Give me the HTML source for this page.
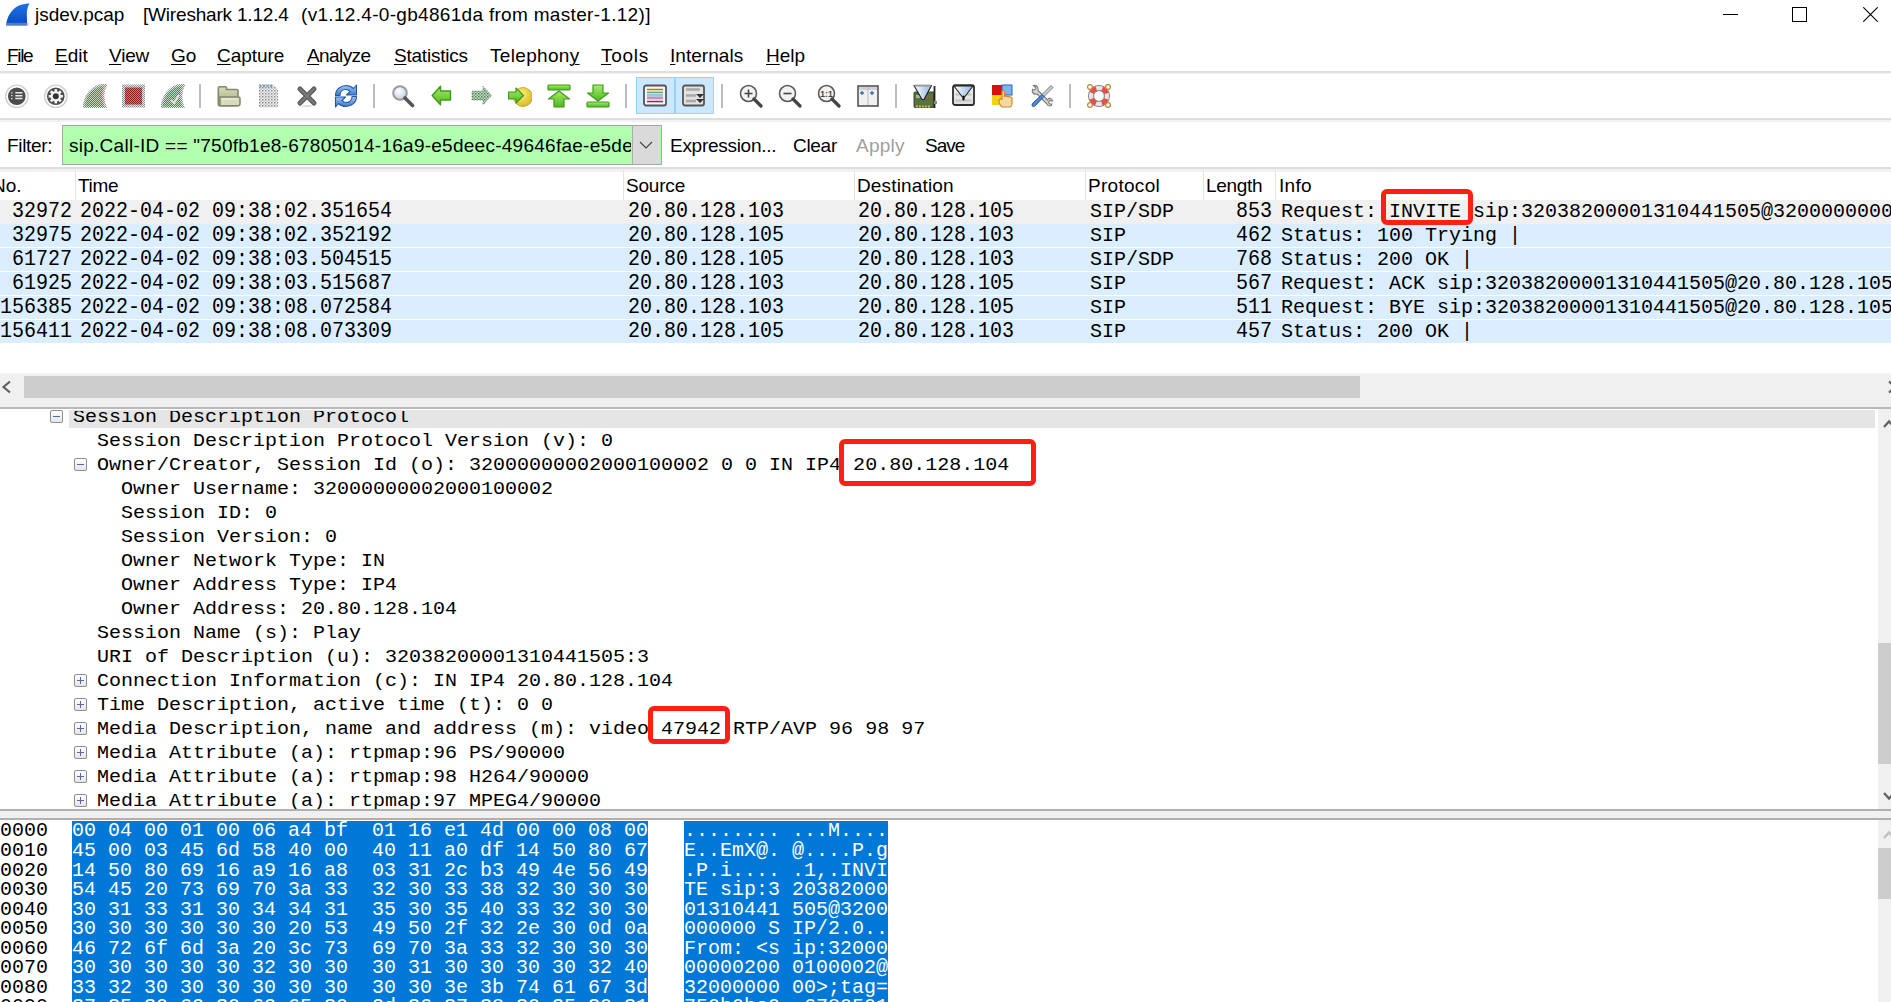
<!DOCTYPE html>
<html><head><meta charset="utf-8"><title>Wireshark</title>
<style>
*{margin:0;padding:0;box-sizing:border-box}
html,body{width:1891px;height:1002px;overflow:hidden;background:#fff}
body{position:relative;font-family:"Liberation Sans",sans-serif;color:#000}
.a{position:absolute;white-space:pre}
.ui{font-size:19px;line-height:20px}
.m{font-family:"Liberation Mono",monospace;font-size:20px;line-height:24px;color:#000}
.pl{transform:scaleY(1.06);transform-origin:0 17.3px}
.tr{transform:scaleY(0.95);transform-origin:0 17.3px}
.hx{transform:scaleY(1.05);transform-origin:0 15.1px}
.hl{position:absolute;left:0;width:1891px}
.ul{text-decoration:underline;text-underline-offset:2px;text-decoration-thickness:1px}
.ico{position:absolute;top:84px;width:24px;height:24px}
.sep{position:absolute;top:84px;width:2px;height:24px;background:#bdbdbd}
.row{position:absolute;left:0;width:1891px;height:23px;background:#daeeff}
.rbox{position:absolute;border:5px solid #ff1f15;border-radius:6px}
.exp{position:absolute;width:13px;height:13px;border:1px solid #8f8f8f;border-radius:2px;background:linear-gradient(#fdfdfd,#e6e6e6)}
.exp i{position:absolute;left:2px;top:5px;width:7px;height:1.3px;background:#5868b0}
.exp b{position:absolute;left:4.9px;top:2px;width:1.3px;height:7px;background:#5868b0}
</style></head><body>
<svg class="a" style="left:6px;top:3px" width="25" height="24" viewBox="0 0 25 24">
<defs><linearGradient id="fin" x1="0" y1="0" x2="0" y2="1"><stop offset="0" stop-color="#1f74e6"/><stop offset="1" stop-color="#0849c0"/></linearGradient></defs>
<path d="M0 22.5 C1 14 5 6 13 2.5 C17 1 21 0.5 23.5 0.5 C22 3 21 6 20.8 10 L21.2 22.5 Z" fill="url(#fin)"/><rect x="0" y="19.8" width="22.5" height="2.7" fill="#8aa4cc" opacity="0.55"/></svg>
<div class="a ui" style="left:35px;top:5px;letter-spacing:0.0px;">jsdev.pcap</div>
<div class="a ui" style="left:143px;top:5px;letter-spacing:-0.19px;">[Wireshark 1.12.4</div>
<div class="a ui" style="left:301px;top:5px;letter-spacing:0.31px;">(v1.12.4-0-gb4861da from master-1.12)]</div>
<div class="a" style="left:1723px;top:14px;width:15px;height:1px;background:#000"></div>
<div class="a" style="left:1792px;top:7px;width:15px;height:15px;border:1px solid #000"></div>
<svg class="a" style="left:1863px;top:7px" width="15" height="15" viewBox="0 0 15 15"><path d="M0.3 0.3 L14.7 14.7 M14.7 0.3 L0.3 14.7" stroke="#000" stroke-width="1.1"/></svg>
<div class="a ui" style="left:7px;top:46px;letter-spacing:-1.33px;"><span class="ul">F</span>ile</div>
<div class="a ui" style="left:55px;top:46px;letter-spacing:0.0px;"><span class="ul">E</span>dit</div>
<div class="a ui" style="left:109px;top:46px;letter-spacing:-0.17px;"><span class="ul">V</span>iew</div>
<div class="a ui" style="left:171px;top:46px;letter-spacing:0.0px;"><span class="ul">G</span>o</div>
<div class="a ui" style="left:217px;top:46px;letter-spacing:-0.05px;"><span class="ul">C</span>apture</div>
<div class="a ui" style="left:307px;top:46px;letter-spacing:-0.6px;"><span class="ul">A</span>nalyze</div>
<div class="a ui" style="left:394px;top:46px;letter-spacing:-0.22px;"><span class="ul">S</span>tatistics</div>
<div class="a ui" style="left:490px;top:46px;letter-spacing:0.32px;">Telephon<span class="ul">y</span></div>
<div class="a ui" style="left:601px;top:46px;letter-spacing:0.7px;"><span class="ul">T</span>ools</div>
<div class="a ui" style="left:670px;top:46px;letter-spacing:0.04px;"><span class="ul">I</span>nternals</div>
<div class="a ui" style="left:766px;top:46px;letter-spacing:0.0px;"><span class="ul">H</span>elp</div>
<div class="hl" style="top:71px;height:2px;background:#e0e0e0"></div>
<div class="hl" style="top:73px;height:1px;background:#f2f2f2"></div>
<!-- TOOLBAR -->
<svg width="0" height="0" style="position:absolute"><defs>
<pattern id="chkG" width="2" height="2" patternUnits="userSpaceOnUse"><rect width="2" height="2" fill="#c4d4c4"/><rect width="1" height="1" fill="#2e962e"/><rect x="1" y="1" width="1" height="1" fill="#4a8a4a"/></pattern>
<pattern id="chkR" width="2" height="2" patternUnits="userSpaceOnUse"><rect width="2" height="2" fill="#b88080"/><rect width="1" height="1" fill="#8e1c1c"/><rect x="1" y="1" width="1" height="1" fill="#8a2424"/></pattern>
<pattern id="chkK" width="2" height="2" patternUnits="userSpaceOnUse"><rect width="2" height="2" fill="#e8e8e8"/><rect width="1" height="1" fill="#8a8a8a"/><rect x="1" y="1" width="1" height="1" fill="#969696"/></pattern>
<linearGradient id="gGreen" x1="0" y1="0" x2="0" y2="1"><stop offset="0" stop-color="#a6ec6e"/><stop offset="1" stop-color="#4fb81e"/></linearGradient>
<linearGradient id="gBlue" x1="0" y1="0" x2="0" y2="1"><stop offset="0" stop-color="#9cc6f0"/><stop offset="1" stop-color="#3a7acb"/></linearGradient>
<radialGradient id="gYel" cx="0.4" cy="0.35" r="0.7"><stop offset="0" stop-color="#fff27a"/><stop offset="1" stop-color="#d9b524"/></radialGradient>
<radialGradient id="gGlass" cx="0.4" cy="0.35" r="0.7"><stop offset="0" stop-color="#ffffff"/><stop offset="1" stop-color="#b8cfe6"/></radialGradient>
<linearGradient id="gFold" x1="0" y1="0" x2="0" y2="1"><stop offset="0" stop-color="#e6e8c8"/><stop offset="1" stop-color="#c4c79c"/></linearGradient>
<pattern id="chkG2" width="3" height="3" patternUnits="userSpaceOnUse"><rect width="3" height="3" fill="#c9d6c9"/><rect width="1.5" height="1.5" fill="#4a844a"/><rect x="1.5" y="1.5" width="1.5" height="1.5" fill="#7aa07a"/></pattern><pattern id="chkP" width="3" height="3" patternUnits="userSpaceOnUse"><rect width="3" height="3" fill="#f0f0f0"/><rect width="1.5" height="1.5" fill="#8c8c8c"/><rect x="1.5" y="1.5" width="1.5" height="1.5" fill="#c8c8c8"/></pattern><linearGradient id="gFold2" x1="0" y1="0" x2="0" y2="1"><stop offset="0" stop-color="#dadcb8"/><stop offset="1" stop-color="#a4a684"/></linearGradient></defs></svg>
<svg class="ico" style="left:5px" viewBox="0 0 24 24"><circle cx="11.8" cy="12.3" r="11.2" fill="none" stroke="#cfcfcf" stroke-width="1.4"/><circle cx="11.8" cy="12.3" r="8.8" fill="#4d4d4d"/><path d="M6 8.8h1.6M6 11.7h1.6M6 14.6h1.6" stroke="#cfcfcf" stroke-width="1.3"/><path d="M10.3 8.8h7.2M10.3 11.7h7.2M10.3 14.6h7.2" stroke="#e8e8e8" stroke-width="1.5"/></svg>
<svg class="ico" style="left:44px" viewBox="0 0 24 24"><circle cx="11.8" cy="12.3" r="11.2" fill="none" stroke="#cfcfcf" stroke-width="1.4"/><circle cx="11.8" cy="12.3" r="8.8" fill="#4d4d4d"/><rect x="10.5" y="5.2" width="2.6" height="2.5" fill="#f4f4f4" transform="rotate(0 11.8 12.3)"/><rect x="10.5" y="5.2" width="2.6" height="2.5" fill="#f4f4f4" transform="rotate(45 11.8 12.3)"/><rect x="10.5" y="5.2" width="2.6" height="2.5" fill="#f4f4f4" transform="rotate(90 11.8 12.3)"/><rect x="10.5" y="5.2" width="2.6" height="2.5" fill="#f4f4f4" transform="rotate(135 11.8 12.3)"/><rect x="10.5" y="5.2" width="2.6" height="2.5" fill="#f4f4f4" transform="rotate(180 11.8 12.3)"/><rect x="10.5" y="5.2" width="2.6" height="2.5" fill="#f4f4f4" transform="rotate(225 11.8 12.3)"/><rect x="10.5" y="5.2" width="2.6" height="2.5" fill="#f4f4f4" transform="rotate(270 11.8 12.3)"/><rect x="10.5" y="5.2" width="2.6" height="2.5" fill="#f4f4f4" transform="rotate(315 11.8 12.3)"/><circle cx="11.8" cy="12.3" r="5.2" fill="#f4f4f4"/><circle cx="11.8" cy="12.3" r="3" fill="#333"/></svg>
<svg class="ico" style="left:83px" viewBox="0 0 24 24"><path d="M0.5 23.5 C1.5 14 6 6 14 2.5 C17 1.2 20.5 0.8 23.3 0.8 C21 4 20 8 20.3 13 C20.6 17 21.3 20.5 22.5 23.5 Z" fill="url(#chkG)" stroke="url(#chkK)" stroke-width="2.2"/></svg>
<svg class="ico" style="left:122px" viewBox="0 0 24 24"><rect x="0" y="0.5" width="23" height="23" fill="url(#chkK)"/><rect x="3" y="3.5" width="17" height="17" fill="url(#chkR)"/></svg>
<svg class="ico" style="left:161px" viewBox="0 0 24 24"><path d="M0.5 23.5 C1.5 14 6 6 14 2.5 C17 1.2 20.5 0.8 23.3 0.8 C21 4 20 8 20.3 13 C20.6 17 21.3 20.5 22.5 23.5 Z" fill="url(#chkG)" stroke="url(#chkK)" stroke-width="2.2"/><path d="M10 16 l3 3 l5 -8" fill="none" stroke="#d8ead8" stroke-width="2.2"/></svg>
<div class="sep" style="left:199px"></div>
<svg class="ico" style="left:217px" viewBox="0 0 24 24"><path d="M1.3 4.2 Q1.3 2.8 2.7 2.8 H8.5 Q9.5 2.8 9.5 4 V5.5 H19.5 Q21 5.5 21 7 V20 Q21 21.8 19.3 21.8 H2.8 Q1.3 21.8 1.3 20.3 Z" fill="url(#gFold2)" stroke="#85876c" stroke-width="1.6"/><path d="M3 13 H21.5 Q23 13 23 15 V19.5 Q23 21.8 21 21.8 H3 Z" fill="#d9dbbc" stroke="#85876c" stroke-width="1.5"/><path d="M4.5 15 H20.5" stroke="#eef0dc" stroke-width="1.2"/></svg>
<svg class="ico" style="left:256px" viewBox="0 0 24 24"><path d="M3 0.5 h14 l5 5 v18 h-19z" fill="url(#chkP)"/><path d="M3.5 2 h13" stroke="#5f93c0" stroke-width="2.4" stroke-dasharray="2 1.5" opacity="0.8"/></svg>
<svg class="ico" style="left:295px" viewBox="0 0 24 24"><path d="M5 5 L19 19 M19 5 L5 19" stroke="#5e5e5e" stroke-width="5" stroke-linecap="round"/><path d="M5 5 L19 19 M19 5 L5 19" stroke="#7a7a7a" stroke-width="2" stroke-linecap="round"/><ellipse cx="12" cy="22" rx="5" ry="1" fill="#ddd"/></svg>
<svg class="ico" style="left:334px" viewBox="0 0 24 24"><path d="M1.5 11.5 C1.5 5 7 1.5 12 1.5 C15.5 1.5 18 3 19.5 4.5 L22.5 1 V11 H12.5 L16 7.5 C15 6.5 13.5 5.5 12 5.5 C8.5 5.5 6 8 6 11.5 Z" fill="url(#gBlue)" stroke="#2456a4" stroke-width="1.1" stroke-linejoin="round"/><path d="M22.5 12.5 C22.5 19 17 22.5 12 22.5 C8.5 22.5 6 21 4.5 19.5 L1.5 23 V13 H11.5 L8 16.5 C9 17.5 10.5 18.5 12 18.5 C15.5 18.5 18 16 18 12.5 Z" fill="url(#gBlue)" stroke="#2456a4" stroke-width="1.1" stroke-linejoin="round"/></svg>
<div class="sep" style="left:373px"></div>
<svg class="ico" style="left:391px" viewBox="0 0 24 24"><circle cx="9" cy="9" r="6.8" fill="url(#gGlass)" stroke="#9a9a9a" stroke-width="2"/><path d="M14 14 L21.5 21.5" stroke="#555" stroke-width="3.6" stroke-linecap="round"/></svg>
<svg class="ico" style="left:430px" viewBox="0 0 24 24"><path d="M2.2 11.5 L10.5 2.2 V7 H20.5 V16 H10.5 V20.8 Z" fill="url(#gGreen)" stroke="#3e9a14" stroke-width="1.4" stroke-linejoin="round"/></svg>
<svg class="ico" style="left:469px" viewBox="0 0 24 24"><path d="M22.5 11.5 L14 2.2 V7 H3 V16 H14 V20.8 Z" fill="url(#chkG2)" stroke="#5a8a5a" stroke-width="0.8" stroke-dasharray="1.5 1.5"/></svg>
<svg class="ico" style="left:508px" viewBox="0 0 24 24"><circle cx="15" cy="13" r="9.5" fill="url(#gYel)" stroke="#c49a20" stroke-width="0.8"/><path d="M0.5 13 V8 H8 V4 L15.5 11.5 L8 19 V15 H0.5 Z" fill="url(#gGreen)" stroke="#3e9a14" stroke-width="1.2" stroke-linejoin="round"/></svg>
<svg class="ico" style="left:547px" viewBox="0 0 24 24"><rect x="1" y="1" width="22" height="5" rx="1" fill="url(#gGreen)" stroke="#3e9a14" stroke-width="1.2"/><path d="M1.5 15 L12 7 L22.5 15 H17 V23 H7 V15 Z" fill="url(#gGreen)" stroke="#3e9a14" stroke-width="1.2" stroke-linejoin="round"/></svg>
<svg class="ico" style="left:586px" viewBox="0 0 24 24"><rect x="1" y="18" width="22" height="5" rx="1" fill="url(#gGreen)" stroke="#3e9a14" stroke-width="1.2"/><path d="M1.5 9 L12 17 L22.5 9 H17 V1 H7 V9 Z" fill="url(#gGreen)" stroke="#3e9a14" stroke-width="1.2" stroke-linejoin="round"/></svg>
<div class="sep" style="left:625px"></div>
<div class="a" style="left:636px;top:77px;width:78px;height:37px;background:#cce8ff;border:1.5px solid #99d1ff"></div>
<div class="a" style="left:674px;top:77px;width:2px;height:37px;background:#99d1ff"></div>
<svg class="ico" style="left:643px" viewBox="0 0 24 24"><rect x="1" y="1.5" width="22" height="20" rx="2" fill="#f4f4f4" stroke="#555" stroke-width="1.8"/><path d="M4 5.5h16" stroke="#c06050" stroke-width="1.4"/><path d="M4 7h16" stroke="#e8e070" stroke-width="1.4"/><path d="M4 8.5h16" stroke="#50b090" stroke-width="1.4"/><path d="M4 10.5h16" stroke="#b0b8e8" stroke-width="1.6"/><path d="M4 12h16" stroke="#90c0a8" stroke-width="1.4"/><path d="M4 14h16" stroke="#c070c0" stroke-width="1.6"/><path d="M4 15.8h16" stroke="#f8c0f8" stroke-width="1.8"/><path d="M4 17.6h16" stroke="#604850" stroke-width="1.4"/></svg>
<svg class="ico" style="left:682px" viewBox="0 0 24 24"><rect x="1" y="1.5" width="21" height="20" rx="2" fill="#e2e2e2" stroke="#555" stroke-width="1.8"/><path d="M4 5.5h14M4 11.5h10M4 17h10" stroke="#a8a8a8" stroke-width="2.6"/><path d="M14 10 L22 10 L18 14Z M14 15 L22 15 L18 19Z" fill="#333"/></svg>
<div class="sep" style="left:721px"></div>
<svg class="ico" style="left:739px" viewBox="0 0 24 24"><circle cx="9.5" cy="9.5" r="8" fill="#f2f2f2" stroke="#5a5a5a" stroke-width="1.6"/><path d="M9.5 5.5v8M5.5 9.5h8" stroke="#444" stroke-width="1.6"/><path d="M15 15 L22 22" stroke="#444" stroke-width="3.2" stroke-linecap="round"/></svg>
<svg class="ico" style="left:778px" viewBox="0 0 24 24"><circle cx="9.5" cy="9.5" r="8" fill="#f2f2f2" stroke="#5a5a5a" stroke-width="1.6"/><path d="M5.5 9.5h8" stroke="#444" stroke-width="1.6"/><path d="M15 15 L22 22" stroke="#444" stroke-width="3.2" stroke-linecap="round"/></svg>
<svg class="ico" style="left:817px" viewBox="0 0 24 24"><circle cx="9.5" cy="9.5" r="8" fill="#f2f2f2" stroke="#5a5a5a" stroke-width="1.6"/><text x="9.5" y="12.5" font-size="8.5" font-family="Liberation Sans" font-weight="bold" text-anchor="middle" fill="#444">1:1</text><path d="M15 15 L22 22" stroke="#444" stroke-width="3.2" stroke-linecap="round"/></svg>
<svg class="ico" style="left:856px" viewBox="0 0 24 24"><rect x="2" y="2" width="20" height="20" fill="#f0f0f0" stroke="#555" stroke-width="1.6"/><rect x="3" y="3" width="18" height="3" fill="#cfcfcf"/><path d="M12 3v18" stroke="#bbb" stroke-width="1"/><path d="M4 9h4M6 7v4M14 9h4M16 7v4" stroke="#3a6fb8" stroke-width="1.3"/></svg>
<div class="sep" style="left:895px"></div>
<svg class="ico" style="left:913px" viewBox="0 0 24 24"><linearGradient id="gFun" x1="0" y1="0" x2="1" y2="0"><stop offset="0" stop-color="#ffffff"/><stop offset="1" stop-color="#8fb4e0"/></linearGradient><path d="M1 9 Q1 8 2 8 H21 V22 Q21 24 19 24 H3 Q1 24 1 22 Z" fill="#56733e" stroke="#2c3b22" stroke-width="0.9"/><path d="M3 22.5 h15" stroke="#c9b45a" stroke-width="2" stroke-dasharray="2 1"/><path d="M14 11v3M17 11v3" stroke="#c04a3a" stroke-width="1.3"/><path d="M3 11 h5 v3 h-5z" fill="#a9b4a0"/><path d="M21.5 2 V24" stroke="#222" stroke-width="1.8"/><path d="M21 17 h3 v3 h-3z" fill="#888"/><path d="M1 1.5 H18.5 L11 15.5 H9 Z" fill="url(#gFun)" stroke="#1e1e1e" stroke-width="1.1" stroke-linejoin="round"/><path d="M1.5 1.6 H18" stroke="#9a9a9a" stroke-width="2"/></svg>
<svg class="ico" style="left:952px" viewBox="0 0 24 24"><linearGradient id="gBox" x1="0" y1="0" x2="0" y2="1"><stop offset="0" stop-color="#f4f4f4"/><stop offset="1" stop-color="#dcdcdc"/></linearGradient><rect x="1" y="1.2" width="21" height="19.8" rx="2" fill="url(#gBox)" stroke="#2e2e2e" stroke-width="1.8"/><path d="M3.5 10.5h16M3.5 16.5h16" stroke="#c2c2c2" stroke-width="2.2"/><path d="M2 2 H21 L12.6 13 H10.4 Z" fill="url(#gFun)" stroke="#222" stroke-width="1.1" stroke-linejoin="round"/><path d="M11.5 12.5 V15.5" stroke="#111" stroke-width="2.2" stroke-linecap="round"/></svg>
<svg class="ico" style="left:991px" viewBox="0 0 24 24"><rect x="1" y="1" width="10" height="10" fill="#d81010"/><rect x="11" y="1" width="10" height="10" fill="#7fb4ee" stroke="#2a62c0" stroke-width="1"/><rect x="1" y="11" width="10" height="10" fill="#f0d410"/><path d="M11 23 C8 20 7 17 9 15 C10 14 11 15 11 16 V8 C11 6 13.5 6 13.5 8 V13 C14 11.5 16 11.5 16 13 C16.5 12 18.5 12 18.5 13.5 C19 12.5 21 13 21 14.5 V19 C21 21 20 23 19 23 Z" fill="#f8d8a0" stroke="#d08a30" stroke-width="1.2"/></svg>
<svg class="ico" style="left:1030px" viewBox="0 0 24 24"><path d="M2.5 5.5 C1.5 8.5 4 11 7 10 L17 20 C17.5 22.5 21.5 23 22 20 L19.5 20 L18.5 18 L20 16.5 L22.5 17 C22 14 18.5 13.5 17.5 16 L8 6.5 C9 3.5 6.5 1 3.5 1.5 L6 4 L5 5.5 L3 6 Z" fill="#d4d4d4" stroke="#7a7a7a" stroke-width="1.1"/><path d="M21 1.5 L23 3.5 L14 12.5 L12 10.5 Z" fill="#cfcfcf" stroke="#7a7a7a" stroke-width="1"/><path d="M12 10.5 L14 12.5 L5.5 21.5 C4.5 23 2 23 2 21 C2 20.5 2.5 19.5 3 19 Z" fill="#4f8ad6" stroke="#2a5a9a" stroke-width="1"/></svg>
<div class="sep" style="left:1069px"></div>
<svg class="ico" style="left:1087px" viewBox="0 0 24 24"><circle cx="12" cy="12" r="8" fill="none" stroke="#e6e6e6" stroke-width="5.2"/><circle cx="12" cy="12" r="8" fill="none" stroke="#f24848" stroke-width="5.2" stroke-dasharray="6.5 6.07" stroke-dashoffset="-3.03"/><circle cx="12" cy="12" r="10.6" fill="none" stroke="#8a8a8a" stroke-width="1"/><circle cx="12" cy="12" r="5.4" fill="#fff" stroke="#7a7a7a" stroke-width="1"/><circle cx="3" cy="3" r="2.4" fill="none" stroke="#c08838" stroke-width="1.3"/><circle cx="21" cy="3" r="2.4" fill="none" stroke="#c08838" stroke-width="1.3"/><circle cx="3" cy="21" r="2.4" fill="none" stroke="#c08838" stroke-width="1.3"/><circle cx="21" cy="21" r="2.4" fill="none" stroke="#c08838" stroke-width="1.3"/></svg>

<div class="hl" style="top:118px;height:2px;background:#dedede"></div>
<div class="hl" style="top:120px;height:2px;background:#f2f2f2"></div>
<div class="a ui" style="left:7px;top:136px;letter-spacing:-0.33px;">Filter:</div>
<div class="a" style="left:62px;top:125px;width:600px;height:40px;border:1.5px solid #a4a4a4;background:#afffaf"></div>
<div class="a" style="left:632px;top:126px;width:28px;height:38px;background:#dadada;border-left:1px solid #adadad"></div>
<div class="a ui" style="left:69px;top:136px;letter-spacing:0.26px;width:562px;overflow:hidden;">sip.Call-ID == "750fb1e8-67805014-16a9-e5deec-49646fae-e5deec-1</div>
<svg class="a" style="left:639px;top:140px" width="14" height="10" viewBox="0 0 14 10"><path d="M1 2 L7 8 L13 2" fill="none" stroke="#444" stroke-width="1.2"/></svg>
<div class="a ui" style="left:670px;top:136px;letter-spacing:-0.28px;">Expression...</div>
<div class="a ui" style="left:793px;top:136px;letter-spacing:-0.3px;">Clear</div>
<div class="a ui" style="left:856px;top:136px;letter-spacing:0.25px;color:#a0a0a0;">Apply</div>
<div class="a ui" style="left:925px;top:136px;letter-spacing:-1.0px;">Save</div>
<div class="hl" style="top:167px;height:2px;background:#dedede"></div>
<div class="hl" style="top:169px;height:3px;background:#f1f1f1"></div>
<div class="a ui" style="left:-8px;top:176px;">No.</div>
<div class="a ui" style="left:78px;top:176px;letter-spacing:-0.33px;">Time</div>
<div class="a ui" style="left:626px;top:176px;letter-spacing:-0.2px;">Source</div>
<div class="a ui" style="left:857px;top:176px;letter-spacing:0.15px;">Destination</div>
<div class="a ui" style="left:1088px;top:176px;letter-spacing:0.29px;">Protocol</div>
<div class="a ui" style="left:1206px;top:176px;letter-spacing:-0.3px;">Length</div>
<div class="a ui" style="left:1279px;top:176px;letter-spacing:0.33px;">Info</div>
<div class="a" style="left:75px;top:170px;width:1px;height:30px;background:#e3e3e3"></div>
<div class="a" style="left:623px;top:170px;width:1px;height:30px;background:#e3e3e3"></div>
<div class="a" style="left:854px;top:170px;width:1px;height:30px;background:#e3e3e3"></div>
<div class="a" style="left:1085px;top:170px;width:1px;height:30px;background:#e3e3e3"></div>
<div class="a" style="left:1203px;top:170px;width:1px;height:30px;background:#e3e3e3"></div>
<div class="a" style="left:1275px;top:170px;width:1px;height:30px;background:#e3e3e3"></div>
<div class="row" style="top:200px;height:24px;background:#f0f0f0"></div>
<div class="a m pl" style="left:0;top:200px;width:72px;text-align:right">32972</div>
<div class="a m pl" style="left:80px;top:200px">2022-04-02 09:38:02.351654</div>
<div class="a m pl" style="left:628px;top:200px">20.80.128.103</div>
<div class="a m pl" style="left:858px;top:200px">20.80.128.105</div>
<div class="a m" style="left:1090px;top:200px">SIP/SDP</div>
<div class="a m pl" style="left:1200px;top:200px;width:72px;text-align:right">853</div>
<div class="a m" style="left:1281px;top:200px">Request: INVITE sip:32038200001310441505@32000000002000100002</div>
<div class="row" style="top:224px"></div>
<div class="a m pl" style="left:0;top:224px;width:72px;text-align:right">32975</div>
<div class="a m pl" style="left:80px;top:224px">2022-04-02 09:38:02.352192</div>
<div class="a m pl" style="left:628px;top:224px">20.80.128.105</div>
<div class="a m pl" style="left:858px;top:224px">20.80.128.103</div>
<div class="a m" style="left:1090px;top:224px">SIP</div>
<div class="a m pl" style="left:1200px;top:224px;width:72px;text-align:right">462</div>
<div class="a m" style="left:1281px;top:224px">Status: 100 Trying |</div>
<div class="row" style="top:248px"></div>
<div class="a m pl" style="left:0;top:248px;width:72px;text-align:right">61727</div>
<div class="a m pl" style="left:80px;top:248px">2022-04-02 09:38:03.504515</div>
<div class="a m pl" style="left:628px;top:248px">20.80.128.105</div>
<div class="a m pl" style="left:858px;top:248px">20.80.128.103</div>
<div class="a m" style="left:1090px;top:248px">SIP/SDP</div>
<div class="a m pl" style="left:1200px;top:248px;width:72px;text-align:right">768</div>
<div class="a m" style="left:1281px;top:248px">Status: 200 OK |</div>
<div class="row" style="top:272px"></div>
<div class="a m pl" style="left:0;top:272px;width:72px;text-align:right">61925</div>
<div class="a m pl" style="left:80px;top:272px">2022-04-02 09:38:03.515687</div>
<div class="a m pl" style="left:628px;top:272px">20.80.128.103</div>
<div class="a m pl" style="left:858px;top:272px">20.80.128.105</div>
<div class="a m" style="left:1090px;top:272px">SIP</div>
<div class="a m pl" style="left:1200px;top:272px;width:72px;text-align:right">567</div>
<div class="a m" style="left:1281px;top:272px">Request: ACK sip:32038200001310441505@20.80.128.105 |</div>
<div class="row" style="top:296px"></div>
<div class="a m pl" style="left:0;top:296px;width:72px;text-align:right">156385</div>
<div class="a m pl" style="left:80px;top:296px">2022-04-02 09:38:08.072584</div>
<div class="a m pl" style="left:628px;top:296px">20.80.128.103</div>
<div class="a m pl" style="left:858px;top:296px">20.80.128.105</div>
<div class="a m" style="left:1090px;top:296px">SIP</div>
<div class="a m pl" style="left:1200px;top:296px;width:72px;text-align:right">511</div>
<div class="a m" style="left:1281px;top:296px">Request: BYE sip:32038200001310441505@20.80.128.105 |</div>
<div class="row" style="top:320px"></div>
<div class="a m pl" style="left:0;top:320px;width:72px;text-align:right">156411</div>
<div class="a m pl" style="left:80px;top:320px">2022-04-02 09:38:08.073309</div>
<div class="a m pl" style="left:628px;top:320px">20.80.128.105</div>
<div class="a m pl" style="left:858px;top:320px">20.80.128.103</div>
<div class="a m" style="left:1090px;top:320px">SIP</div>
<div class="a m pl" style="left:1200px;top:320px;width:72px;text-align:right">457</div>
<div class="a m" style="left:1281px;top:320px">Status: 200 OK |</div>
<div class="rbox" style="left:1381px;top:189px;width:92px;height:36px"></div>
<div class="hl" style="top:373px;height:34px;background:#f0f0f0;border-top:1px solid #f7f7f7"></div>
<div class="a" style="left:24px;top:376px;width:1336px;height:22px;background:#cdcdcd"></div>
<svg class="a" style="left:0;top:380px" width="14" height="14" viewBox="0 0 14 14"><path d="M10 1.5 L3.5 7 L10 12.5" fill="none" stroke="#606060" stroke-width="2.2"/></svg>
<svg class="a" style="left:1885px;top:380px" width="14" height="14" viewBox="0 0 14 14"><path d="M4 1.5 L10.5 7 L4 12.5" fill="none" stroke="#606060" stroke-width="2.2"/></svg>
<div class="hl" style="top:407px;height:2px;background:#b9b9b9"></div>
<div class="a" style="left:0;top:409px;width:1891px;height:400px;overflow:hidden">
<div class="a" style="left:69px;top:1px;width:1806px;height:18px;background:#e5e5e5"></div>
<div class="exp" style="left:50px;top:1px"><i></i></div>
<div class="a" style="left:0;top:2px;width:1875px;height:30px;overflow:hidden"><div class="a m tr" style="left:73px;top:-5.8px">Session Description Protocol</div></div>
<div class="a m tr" style="left:97px;top:20.2px">Session Description Protocol Version (v): 0</div>
<div class="exp" style="left:74px;top:49px"><i></i></div>
<div class="a m tr" style="left:97px;top:44.2px">Owner/Creator, Session Id (o): 32000000002000100002 0 0 IN IP4 20.80.128.104</div>
<div class="a m tr" style="left:121px;top:68.2px">Owner Username: 32000000002000100002</div>
<div class="a m tr" style="left:121px;top:92.2px">Session ID: 0</div>
<div class="a m tr" style="left:121px;top:116.2px">Session Version: 0</div>
<div class="a m tr" style="left:121px;top:140.2px">Owner Network Type: IN</div>
<div class="a m tr" style="left:121px;top:164.2px">Owner Address Type: IP4</div>
<div class="a m tr" style="left:121px;top:188.2px">Owner Address: 20.80.128.104</div>
<div class="a m tr" style="left:97px;top:212.2px">Session Name (s): Play</div>
<div class="a m tr" style="left:97px;top:236.2px">URI of Description (u): 32038200001310441505:3</div>
<div class="exp" style="left:74px;top:265px"><i></i><b></b></div>
<div class="a m tr" style="left:97px;top:260.2px">Connection Information (c): IN IP4 20.80.128.104</div>
<div class="exp" style="left:74px;top:289px"><i></i><b></b></div>
<div class="a m tr" style="left:97px;top:284.2px">Time Description, active time (t): 0 0</div>
<div class="exp" style="left:74px;top:313px"><i></i><b></b></div>
<div class="a m tr" style="left:97px;top:308.2px">Media Description, name and address (m): video 47942 RTP/AVP 96 98 97</div>
<div class="exp" style="left:74px;top:337px"><i></i><b></b></div>
<div class="a m tr" style="left:97px;top:332.2px">Media Attribute (a): rtpmap:96 PS/90000</div>
<div class="exp" style="left:74px;top:361px"><i></i><b></b></div>
<div class="a m tr" style="left:97px;top:356.2px">Media Attribute (a): rtpmap:98 H264/90000</div>
<div class="exp" style="left:74px;top:385px"><i></i><b></b></div>
<div class="a m tr" style="left:97px;top:380.2px">Media Attribute (a): rtpmap:97 MPEG4/90000</div>
</div>
<div class="rbox" style="left:839px;top:439px;width:197px;height:47px"></div>
<div class="rbox" style="left:648px;top:706px;width:82px;height:38px"></div>
<div class="a" style="left:1878px;top:409px;width:13px;height:400px;background:#f0f0f0"></div>
<div class="a" style="left:1878px;top:643px;width:13px;height:121px;background:#cdcdcd"></div>
<svg class="a" style="left:1883px;top:418px" width="12" height="12" viewBox="0 0 12 12"><path d="M1 9 L6 3.5 L11 9" fill="none" stroke="#606060" stroke-width="2.2"/></svg>
<svg class="a" style="left:1883px;top:790px" width="12" height="12" viewBox="0 0 12 12"><path d="M1 3 L6 8.5 L11 3" fill="none" stroke="#606060" stroke-width="2.2"/></svg>
<div class="hl" style="top:809px;height:1.5px;background:#b0b0b0"></div>
<div class="hl" style="top:810.5px;height:8px;background:#f0f0f0"></div>
<div class="hl" style="top:818px;height:1.5px;background:#b0b0b0"></div>
<div class="a" style="left:0;top:820px;width:1878px;height:182px;overflow:hidden">
<div class="a" style="left:72px;top:1px;width:576px;height:200px;background:#0078d7"></div>
<div class="a" style="left:684px;top:1px;width:204px;height:200px;background:#0078d7"></div>
<div class="a m hx" style="left:0;top:1.40px;line-height:19.5px">0000</div>
<div class="a m hx" style="left:72px;top:1.40px;line-height:19.5px;color:#fff">00 04 00 01 00 06 a4 bf  01 16 e1 4d 00 00 08 00</div>
<div class="a m hx" style="left:684px;top:1.40px;line-height:19.5px;color:#fff">........ ...M....</div>
<div class="a m hx" style="left:0;top:20.95px;line-height:19.5px">0010</div>
<div class="a m hx" style="left:72px;top:20.95px;line-height:19.5px;color:#fff">45 00 03 45 6d 58 40 00  40 11 a0 df 14 50 80 67</div>
<div class="a m hx" style="left:684px;top:20.95px;line-height:19.5px;color:#fff">E..EmX@. @....P.g</div>
<div class="a m hx" style="left:0;top:40.50px;line-height:19.5px">0020</div>
<div class="a m hx" style="left:72px;top:40.50px;line-height:19.5px;color:#fff">14 50 80 69 16 a9 16 a8  03 31 2c b3 49 4e 56 49</div>
<div class="a m hx" style="left:684px;top:40.50px;line-height:19.5px;color:#fff">.P.i.... .1,.INVI</div>
<div class="a m hx" style="left:0;top:60.05px;line-height:19.5px">0030</div>
<div class="a m hx" style="left:72px;top:60.05px;line-height:19.5px;color:#fff">54 45 20 73 69 70 3a 33  32 30 33 38 32 30 30 30</div>
<div class="a m hx" style="left:684px;top:60.05px;line-height:19.5px;color:#fff">TE sip:3 20382000</div>
<div class="a m hx" style="left:0;top:79.60px;line-height:19.5px">0040</div>
<div class="a m hx" style="left:72px;top:79.60px;line-height:19.5px;color:#fff">30 31 33 31 30 34 34 31  35 30 35 40 33 32 30 30</div>
<div class="a m hx" style="left:684px;top:79.60px;line-height:19.5px;color:#fff">01310441 505@3200</div>
<div class="a m hx" style="left:0;top:99.15px;line-height:19.5px">0050</div>
<div class="a m hx" style="left:72px;top:99.15px;line-height:19.5px;color:#fff">30 30 30 30 30 30 20 53  49 50 2f 32 2e 30 0d 0a</div>
<div class="a m hx" style="left:684px;top:99.15px;line-height:19.5px;color:#fff">000000 S IP/2.0..</div>
<div class="a m hx" style="left:0;top:118.70px;line-height:19.5px">0060</div>
<div class="a m hx" style="left:72px;top:118.70px;line-height:19.5px;color:#fff">46 72 6f 6d 3a 20 3c 73  69 70 3a 33 32 30 30 30</div>
<div class="a m hx" style="left:684px;top:118.70px;line-height:19.5px;color:#fff">From: &lt;s ip:32000</div>
<div class="a m hx" style="left:0;top:138.25px;line-height:19.5px">0070</div>
<div class="a m hx" style="left:72px;top:138.25px;line-height:19.5px;color:#fff">30 30 30 30 30 32 30 30  30 31 30 30 30 30 32 40</div>
<div class="a m hx" style="left:684px;top:138.25px;line-height:19.5px;color:#fff">00000200 0100002@</div>
<div class="a m hx" style="left:0;top:157.80px;line-height:19.5px">0080</div>
<div class="a m hx" style="left:72px;top:157.80px;line-height:19.5px;color:#fff">33 32 30 30 30 30 30 30  30 30 3e 3b 74 61 67 3d</div>
<div class="a m hx" style="left:684px;top:157.80px;line-height:19.5px;color:#fff">32000000 00&gt;;tag=</div>
<div class="a m hx" style="left:0;top:177.35px;line-height:19.5px">0090</div>
<div class="a m hx" style="left:72px;top:177.35px;line-height:19.5px;color:#fff">37 35 30 62 30 62 65 30  2d 36 37 38 30 35 30 31</div>
<div class="a m hx" style="left:684px;top:177.35px;line-height:19.5px;color:#fff">750b0be0 -6780501</div>
</div>
<div class="a" style="left:1878px;top:820px;width:13px;height:182px;background:#f0f0f0"></div>
<div class="a" style="left:1878px;top:848px;width:13px;height:51px;background:#cdcdcd"></div>
<svg class="a" style="left:1883px;top:829px" width="12" height="12" viewBox="0 0 12 12"><path d="M1 9 L6 3.5 L11 9" fill="none" stroke="#bfbfbf" stroke-width="2.2"/></svg>
</body></html>
